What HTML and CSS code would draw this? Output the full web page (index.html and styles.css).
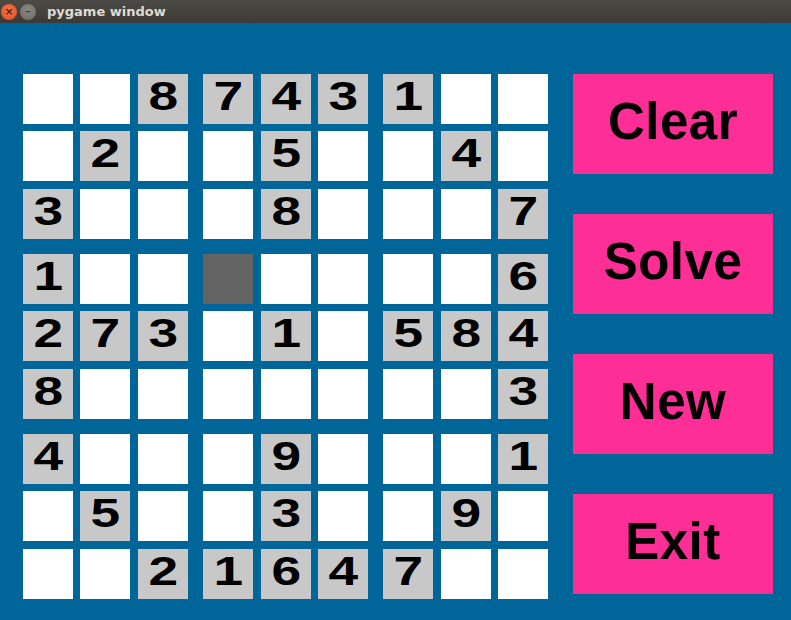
FILE: index.html
```html
<!DOCTYPE html>
<html>
<head>
<meta charset="utf-8">
<title>pygame window</title>
<link rel="stylesheet" href="styles.css">
</head>
<body>
<div class="titlebar">
  <span class="wbtn close">×</span>
  <span class="wbtn min">–</span>
  <span class="title">pygame window</span>
</div>
<div class="main">
  <div class="board">
    <div class="cell"></div><div class="cell"></div><div class="cell given"><span>8</span></div><div class="cell given"><span>7</span></div><div class="cell given"><span>4</span></div><div class="cell given"><span>3</span></div><div class="cell given"><span>1</span></div><div class="cell"></div><div class="cell"></div>
    <div class="cell"></div><div class="cell given"><span>2</span></div><div class="cell"></div><div class="cell"></div><div class="cell given"><span>5</span></div><div class="cell"></div><div class="cell"></div><div class="cell given"><span>4</span></div><div class="cell"></div>
    <div class="cell given"><span>3</span></div><div class="cell"></div><div class="cell"></div><div class="cell"></div><div class="cell given"><span>8</span></div><div class="cell"></div><div class="cell"></div><div class="cell"></div><div class="cell given"><span>7</span></div>
    <div class="cell given"><span>1</span></div><div class="cell"></div><div class="cell"></div><div class="cell selected"></div><div class="cell"></div><div class="cell"></div><div class="cell"></div><div class="cell"></div><div class="cell given"><span>6</span></div>
    <div class="cell given"><span>2</span></div><div class="cell given"><span>7</span></div><div class="cell given"><span>3</span></div><div class="cell"></div><div class="cell given"><span>1</span></div><div class="cell"></div><div class="cell given"><span>5</span></div><div class="cell given"><span>8</span></div><div class="cell given"><span>4</span></div>
    <div class="cell given"><span>8</span></div><div class="cell"></div><div class="cell"></div><div class="cell"></div><div class="cell"></div><div class="cell"></div><div class="cell"></div><div class="cell"></div><div class="cell given"><span>3</span></div>
    <div class="cell given"><span>4</span></div><div class="cell"></div><div class="cell"></div><div class="cell"></div><div class="cell given"><span>9</span></div><div class="cell"></div><div class="cell"></div><div class="cell"></div><div class="cell given"><span>1</span></div>
    <div class="cell"></div><div class="cell given"><span>5</span></div><div class="cell"></div><div class="cell"></div><div class="cell given"><span>3</span></div><div class="cell"></div><div class="cell"></div><div class="cell given"><span>9</span></div><div class="cell"></div>
    <div class="cell"></div><div class="cell"></div><div class="cell given"><span>2</span></div><div class="cell given"><span>1</span></div><div class="cell given"><span>6</span></div><div class="cell given"><span>4</span></div><div class="cell given"><span>7</span></div><div class="cell"></div><div class="cell"></div>
  </div>
  <div class="buttons">
    <div class="btn">Clear</div>
    <div class="btn">Solve</div>
    <div class="btn">New</div>
    <div class="btn">Exit</div>
  </div>
</div>
</body>
</html>
```
FILE: styles.css
```css
html, body {
  margin: 0;
  padding: 0;
  width: 791px;
  height: 620px;
  overflow: hidden;
  background: #006699;
}
.titlebar {
  height: 23px;
  background: linear-gradient(#4b4a45, #3b3a36);
  display: flex;
  align-items: center;
  padding-left: 1px;
}
.wbtn {
  width: 16px;
  height: 16px;
  border-radius: 50%;
  display: flex;
  align-items: center;
  justify-content: center;
  font-family: "DejaVu Sans", sans-serif;
  font-size: 11px;
  font-weight: bold;
  line-height: 1;
  margin-right: 3px;
}
.close {
  background: radial-gradient(circle at 50% 40%, #f5774a, #dd4a1c);
  color: #5a1d08;
}
.min {
  background: radial-gradient(circle at 50% 40%, #8a8983, #6a6964);
  color: #3a3935;
}
.title {
  margin-left: 8px;
  font-family: "DejaVu Sans", sans-serif;
  font-weight: bold;
  font-size: 13px;
  color: #dfdbd2;
}
.main {
  display: flex;
  padding: 51px 0 0 23px;
}
.board {
  display: grid;
  grid-template-columns: 57px 58px 65px 58px 57px 65px 58px 57px 50px;
  grid-template-rows: 57px 58px 65px 57px 58px 65px 57px 58px 50px;
}
.cell {
  width: 50px;
  height: 50px;
  box-sizing: border-box;
  padding-bottom: 5px;
  background: #ffffff;
  display: flex;
  align-items: center;
  justify-content: center;
  font-family: "Liberation Sans", Arial, sans-serif;
  font-weight: bold;
  font-size: 41px;
  line-height: 1;
  color: #000;
}
.cell span {
  display: inline-block;
  transform: scaleX(1.3);
}
.given {
  background: #c8c8c8;
}
.selected {
  background: #646464;
}
.buttons {
  margin-left: 25px;
  display: flex;
  flex-direction: column;
  gap: 40px;
}
.btn {
  width: 200px;
  height: 100px;
  box-sizing: border-box;
  padding-bottom: 6px;
  background: #fd2e96;
  display: flex;
  align-items: center;
  justify-content: center;
  font-family: "Liberation Sans", Arial, sans-serif;
  font-weight: bold;
  font-size: 51px;
  line-height: 1;
  letter-spacing: 0.5px;
  color: #000;
}
```
